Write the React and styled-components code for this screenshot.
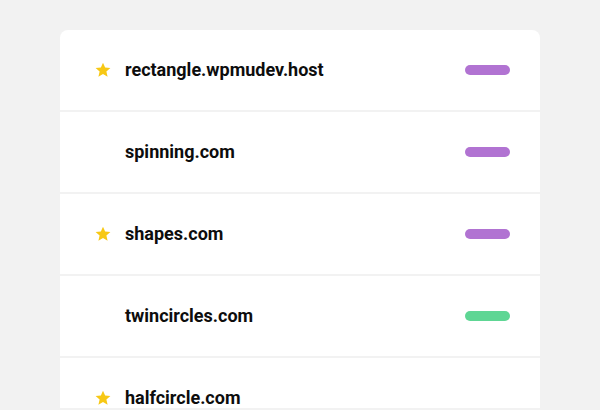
import React from 'react';
import styled, { createGlobalStyle } from 'styled-components';

const GlobalStyle = createGlobalStyle`
  html, body {
    margin: 0;
    padding: 0;
    background: #f2f2f2;
    font-family: Roboto, "Liberation Sans", sans-serif;
  }
`;

const Page = styled.div`
  height: 408px;
  overflow: hidden;
  padding-top: 30px;
  box-sizing: border-box;
  display: flex;
  justify-content: center;
`;

const Card = styled.ul`
  list-style: none;
  margin: 0;
  padding: 0;
  width: 480px;
  background: #f2f2f2;
  border-radius: 8px 8px 0 0;
  overflow: hidden;
  display: flex;
  flex-direction: column;
  gap: 2px;
  align-self: flex-start;
`;

const Row = styled.li`
  height: 80px;
  flex-shrink: 0;
  background: #fff;
  display: flex;
  align-items: center;
  padding: 0 30px 0 35px;
`;

const StarSlot = styled.span`
  width: 16px;
  height: 16px;
  margin-right: 14px;
  display: flex;
  align-items: center;
  justify-content: center;
`;

const Domain = styled.span`
  flex: 1;
  font-size: 18px;
  line-height: 20px;
  padding-bottom: 1px;
  font-weight: 700;
  color: #0d0d0d;
`;

const Status = styled.span`
  width: 45px;
  height: 10px;
  border-radius: 5px;
  background: ${p => (p.$ok ? '#5ed694' : '#b173d2')};
`;

const Star = () => (
  <svg width="16" height="16" viewBox="0 0 24 24">
    <path
      fill="#f7c815"
      d="M12 1l3.2 7.3 7.9.7-6 5.3 1.8 7.8L12 18l-6.9 4.1 1.8-7.8-6-5.3 7.9-.7z"
    />
  </svg>
);

const sites = [
  { name: 'rectangle.wpmudev.host', fav: true, status: 'warn' },
  { name: 'spinning.com', fav: false, status: 'warn' },
  { name: 'shapes.com', fav: true, status: 'warn' },
  { name: 'twincircles.com', fav: false, status: 'ok' },
  { name: 'halfcircle.com', fav: true, status: null },
];

export default function App() {
  return (
    <>
      <GlobalStyle />
      <Page>
        <Card>
          {sites.map(s => (
            <Row key={s.name}>
              <StarSlot>{s.fav && <Star />}</StarSlot>
              <Domain>{s.name}</Domain>
              {s.status && <Status $ok={s.status === 'ok'} />}
            </Row>
          ))}
        </Card>
      </Page>
    </>
  );
}
